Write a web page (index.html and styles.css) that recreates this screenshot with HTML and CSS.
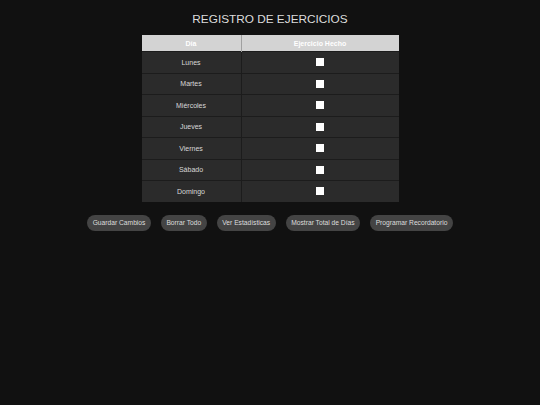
FILE: index.html
```html
<!DOCTYPE html>
<html lang="es">
<head>
<meta charset="utf-8">
<title>Registro de Ejercicios</title>
<link rel="stylesheet" href="styles.css">
</head>
<body>
<main class="page">
  <h1 class="title">REGISTRO DE EJERCICIOS</h1>
  <table class="log">
    <thead>
      <tr><th class="col-day">Día</th><th>Ejercicio Hecho</th></tr>
    </thead>
    <tbody>
      <tr><td>Lunes</td><td><span class="check"></span></td></tr>
      <tr><td>Martes</td><td><span class="check"></span></td></tr>
      <tr><td>Miércoles</td><td><span class="check"></span></td></tr>
      <tr><td>Jueves</td><td><span class="check"></span></td></tr>
      <tr><td>Viernes</td><td><span class="check"></span></td></tr>
      <tr><td>Sábado</td><td><span class="check"></span></td></tr>
      <tr><td>Domingo</td><td><span class="check"></span></td></tr>
    </tbody>
  </table>
  <div class="actions">
    <button class="btn">Guardar Cambios</button>
    <button class="btn">Borrar Todo</button>
    <button class="btn">Ver Estadísticas</button>
    <button class="btn">Mostrar Total de Días</button>
    <button class="btn">Programar Recordatorio</button>
  </div>
</main>
</body>
</html>
```

FILE: styles.css
```css
html, body {
  margin: 0;
  padding: 0;
  background: #111111;
  font-family: "Liberation Sans", Arial, sans-serif;
}

.page {
  display: flex;
  flex-direction: column;
  align-items: center;
  padding-top: 11px;
}

.title {
  margin: 0 0 7px;
  font-size: 11.8px;
  line-height: 17px;
  font-weight: normal;
  color: #dddddd;
}

.log {
  width: 257px;
  border-collapse: collapse;
  table-layout: fixed;
  font-size: 7px;
}

.col-day {
  width: 99px;
}

.log th {
  height: 16px;
  padding: 0;
  background: #d3d3d3;
  color: #ffffff;
  font-weight: bold;
  border-right: 1px solid #a0a0a0;
}

.log th:last-child {
  border-right: none;
}

.log td {
  height: 20.5px;
  padding: 0;
  background: #2b2b2b;
  color: #d8d8d8;
  text-align: center;
  border-top: 1px solid #1c1c1c;
  border-right: 1px solid #1c1c1c;
}

.log td:last-child {
  border-right: none;
}

.check {
  display: inline-block;
  width: 8px;
  height: 8px;
  background: #ffffff;
  vertical-align: middle;
}

.actions {
  display: flex;
  gap: 10px;
  margin-top: 13px;
}

.btn {
  height: 16px;
  padding: 0 5.5px;
  border: none;
  border-radius: 8px;
  background: #444444;
  color: #dddddd;
  font-family: "Liberation Sans", Arial, sans-serif;
  font-size: 6.7px;
}
```
